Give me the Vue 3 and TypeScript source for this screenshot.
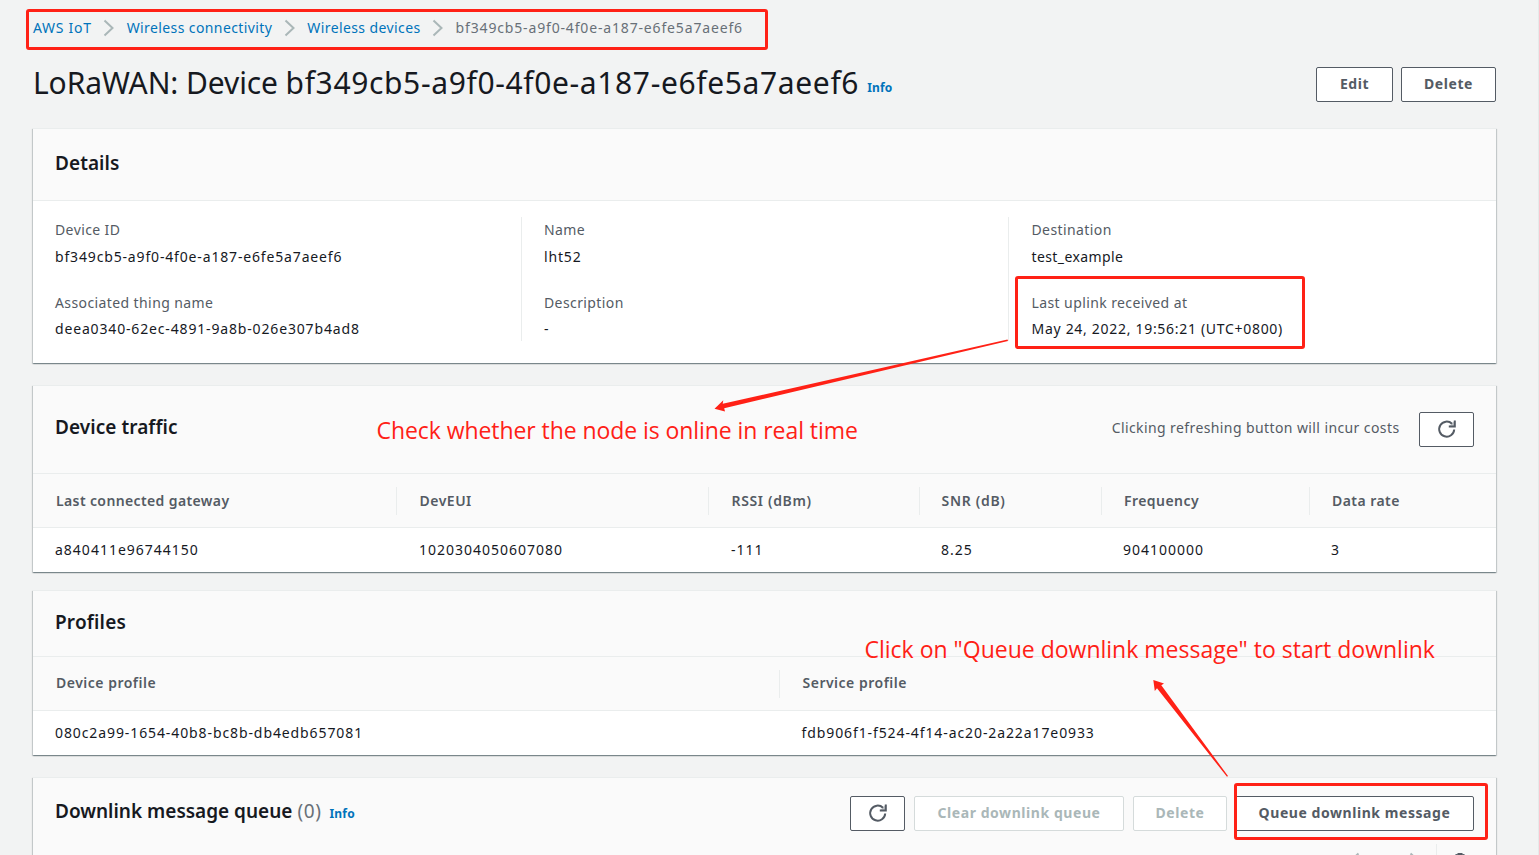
<script setup lang="ts">
interface Field {
  label: string
  value: string
  kind: 'plain' | 'id'
}
interface Column {
  header: string
  value: string
  kind: string
}

const crumbs: string[] = ['AWS IoT', 'Wireless connectivity', 'Wireless devices']
const deviceId = 'bf349cb5-a9f0-4f0e-a187-e6fe5a7aeef6'

const details: Field[][] = [
  [
    { label: 'Device ID', value: deviceId, kind: 'id' },
    { label: 'Associated thing name', value: 'deea0340-62ec-4891-9a8b-026e307b4ad8', kind: 'id' },
  ],
  [
    { label: 'Name', value: 'lht52', kind: 'id' },
    { label: 'Description', value: '-', kind: 'plain' },
  ],
  [
    { label: 'Destination', value: 'test_example', kind: 'plain' },
    { label: 'Last uplink received at', value: 'May 24, 2022, 19:56:21 (UTC+0800)', kind: 'plain' },
  ],
]

const traffic: Column[] = [
  { header: 'Last connected gateway', value: 'a840411e96744150', kind: 'num' },
  { header: 'DevEUI', value: '1020304050607080', kind: 'num' },
  { header: 'RSSI (dBm)', value: '-111', kind: 'num' },
  { header: 'SNR (dB)', value: '8.25', kind: 'num' },
  { header: 'Frequency', value: '904100000', kind: 'num' },
  { header: 'Data rate', value: '3', kind: 'num' },
]

const profiles: Column[] = [
  { header: 'Device profile', value: '080c2a99-1654-40b8-bc8b-db4edb657081', kind: 'wide-id' },
  { header: 'Service profile', value: 'fdb906f1-f524-4f14-ac20-2a22a17e0933', kind: 'wide-id' },
]
</script>

<template>
  <div class="page">
    <nav class="crumbs">
      <template v-for="c in crumbs" :key="c">
        <a class="link" :class="{ first: c === 'AWS IoT' }">{{ c }}</a>
        <svg class="chev" width="12" height="18" viewBox="0 0 12 18"><path d="M1.5 1.5 9.5 9l-8 7.5" /></svg>
      </template>
      <span class="current id">{{ deviceId }}</span>
    </nav>

    <header class="title-row">
      <h1>LoRaWAN: Device <span class="title-id">{{ deviceId }}</span></h1>
      <a class="info">Info</a>
      <div class="actions">
        <button class="btn w-edit">Edit</button>
        <button class="btn w-del">Delete</button>
      </div>
    </header>

    <section class="card details">
      <div class="head"><h2>Details</h2></div>
      <div class="cols">
        <div v-for="(col, i) in details" :key="i" class="col">
          <div v-for="f in col" :key="f.label" class="field">
            <div class="label">{{ f.label }}</div>
            <div class="value" :class="[f.kind, { date: f.label.startsWith('Last') }]">{{ f.value }}</div>
          </div>
        </div>
      </div>
    </section>

    <section class="card traffic">
      <div class="head">
        <h2>Device traffic</h2>
        <span class="hint">Clicking refreshing button will incur costs</span>
        <button class="btn w-icon">
          <svg class="refresh" width="18" height="18" viewBox="0 0 18 18"><path d="M16.200 9.500A7.500 7.500 0 1 1 14 3.800" /><path class="tip" d="M16.800.4v6h-6" /></svg>
        </button>
      </div>
      <div class="table grid-traffic">
        <div v-for="c in traffic" :key="c.header" class="th"><span>{{ c.header }}</span></div>
        <div v-for="c in traffic" :key="c.value" class="td" :class="c.kind">{{ c.value }}</div>
      </div>
    </section>

    <section class="card profiles">
      <div class="head"><h2>Profiles</h2></div>
      <div class="table grid-profiles">
        <div v-for="c in profiles" :key="c.header" class="th"><span>{{ c.header }}</span></div>
        <div v-for="c in profiles" :key="c.value" class="td" :class="c.kind">{{ c.value }}</div>
      </div>
    </section>

    <section class="card queue">
      <div class="head">
        <h2>Downlink message queue <span class="count">(0)</span></h2>
        <a class="info">Info</a>
        <div class="actions">
          <button class="btn w-icon">
            <svg class="refresh" width="18" height="18" viewBox="0 0 18 18"><path d="M16.200 9.500A7.500 7.500 0 1 1 14 3.800" /><path class="tip" d="M16.800.4v6h-6" /></svg>
          </button>
          <button class="btn w-clear" disabled>Clear downlink queue</button>
          <button class="btn w-qdel" disabled>Delete</button>
          <button class="btn w-queue">Queue downlink message</button>
        </div>
      </div>
      <div class="pager">
        <svg class="nav" width="12" height="18" viewBox="0 0 12 18"><path d="M10.5 1.5 2.5 9l8 7.5" /></svg>
        <svg class="nav next" width="12" height="18" viewBox="0 0 12 18"><path d="M1.5 1.5 9.5 9l-8 7.5" /></svg>
        <span class="gear">
          <svg width="18" height="18" viewBox="0 0 18 18"><path class="cog" d="M6.500 1h5v1.200L13 2l2.500 2.500-1 2L17 7v4l-2.500.5 1 2L13 16l-2-1-.5 2h-3L7 15l-2 1-2.500-2.500 1-2L1 11V7l2.500-.5-1-2L5 2l1.500.2z" /></svg>
        </span>
      </div>
    </section>

    <svg class="marks" width="1539" height="855" viewBox="0 0 1539 855">
      <g class="boxes">
        <rect x="27.5" y="10.5" width="739" height="38" rx="1.5" />
        <rect x="1016.5" y="277.5" width="287" height="70" rx="1.5" />
        <rect x="1235.5" y="784.5" width="251" height="54" rx="1.5" />
      </g>
      <g class="arrows">
        <path d="M714.500 408.700 723.300 400.200 722.700 403.800 1007.500 339.600 1008 341 724.200 408.300 725 411.500z" />
        <path d="M1153.300 680 1164 683.400 1161.300 685.200 1228 776 1227 776.800 1157 688.200 1154.800 691z" />
      </g>
      <text class="note check" x="376.500" y="439">Check whether the node is online in real time</text>
      <text class="note" x="864.500" y="658">Click on "Queue downlink message" to start downlink</text>
    </svg>
  </div>
</template>

<style>
body {
  margin: 0;
  background: #f2f3f3;
}
</style>

<style scoped>
.page {
  position: relative;
  box-sizing: border-box;
  width: 1539px;
  height: 855px;
  overflow: hidden;
  padding: 0 42px 0 33px;
  border-right: 1px solid #e6e9e9;
  background: #f2f3f3;
  color: #16191f;
  font: 400 14px/22px "Noto Sans", "Open Sans", sans-serif;
  letter-spacing: 0.4px;
}
h1,
h2 {
  margin: 0;
}
.id {
  letter-spacing: 0.84px;
}
.wide-id {
  letter-spacing: 0.9px;
}
.num {
  letter-spacing: 1px;
}
.crumbs {
  display: flex;
  align-items: center;
  height: 56px;
}
.link,
.info {
  color: #0073bb;
}
.first {
  letter-spacing: 0.7px;
}
.chev {
  margin: 0 11.5px;
}
.chev path,
.nav path {
  fill: none;
  stroke: #aab7b8;
  stroke-width: 2;
}
.current {
  color: #687078;
}
.title-row {
  display: flex;
  height: 72px;
}
h1 {
  font-size: 30px;
  font-weight: 400;
  line-height: 40px;
  margin-top: 7px;
  letter-spacing: -0.1px;
  white-space: nowrap;
}
.title-id {
  letter-spacing: 0.63px;
}
.info {
  font-size: 12px;
  font-weight: 700;
  letter-spacing: 0.2px;
}
.title-row .info {
  margin: 21px 0 0 8px;
}
.actions {
  display: flex;
  margin-left: auto;
}
.title-row .actions {
  gap: 8px;
  margin-top: 11px;
}
.btn {
  box-sizing: border-box;
  height: 35px;
  padding: 0 0 1px;
  border: 1px solid #545b64;
  border-radius: 2px;
  background: #fff;
  color: #545b64;
  font: 700 14px/20px "Noto Sans", "Open Sans", sans-serif;
  letter-spacing: 0.56px;
  white-space: nowrap;
}
.btn:disabled {
  border-color: #d5dbdb;
  color: #aab7b8;
}
.w-edit {
  width: 77px;
}
.w-del {
  width: 95px;
}
.w-icon {
  display: flex;
  align-items: center;
  justify-content: center;
  width: 55px;
}
.w-clear {
  width: 210px;
}
.w-qdel {
  width: 94px;
}
.w-queue {
  width: 239px;
}
.refresh {
  display: block;
  overflow: visible;
}
.refresh path {
  fill: none;
  stroke: #545b64;
  stroke-width: 2;
}
.refresh .tip {
  fill: #545b64;
  fill-opacity: 0.35;
}
.card {
  box-sizing: border-box;
  border-top: 1px solid #eaeded;
  background: #fff;
  box-shadow: 0 1px 1px 0 rgba(0, 28, 36, 0.3), 1px 1px 1px 0 rgba(0, 28, 36, 0.15), -1px 1px 1px 0 rgba(0, 28, 36, 0.15);
}
.head {
  box-sizing: border-box;
  display: flex;
  align-items: center;
  padding: 0 22px;
  border-bottom: 1px solid #eaeded;
  background: #fafafa;
}
h2 {
  font-size: 19px;
  font-weight: 600;
  line-height: 26px;
  letter-spacing: 0.06px;
  white-space: nowrap;
}
.details {
  height: 235px;
}
.details .head {
  height: 72px;
  padding-bottom: 3px;
}
.cols {
  display: grid;
  grid-template-columns: 489px 487px 1fr;
  padding-top: 16px;
}
.col {
  box-sizing: border-box;
  height: 124px;
  padding: 2px 0 0 22px;
  border-right: 1px solid #eaeded;
}
.col:last-child {
  border-right: 0;
  padding-left: 22.5px;
}
.field + .field {
  margin-top: 24px;
}
.label {
  color: #545b64;
}
.value {
  margin-top: 5px;
}
.field + .field .value {
  margin-top: 4px;
}
.date {
  letter-spacing: 0.7px;
}
.traffic {
  height: 187px;
  margin-top: 22px;
}
.traffic .head {
  height: 88px;
}
.traffic h2 {
  margin-top: -5px;
}
.hint {
  margin: -4px 19.5px 0 auto;
  color: #545b64;
}
.table {
  display: grid;
}
.grid-traffic {
  grid-template-columns: 364px 312px 211px 182px 208px 1fr;
}
.grid-profiles {
  grid-template-columns: 747px 1fr;
}
.th {
  box-sizing: border-box;
  height: 54px;
  padding-top: 13px;
  border-bottom: 1px solid #eaeded;
  background: #fafafa;
  color: #545b64;
  font-weight: 600;
  letter-spacing: 0.5px;
}
.th span {
  box-sizing: border-box;
  display: block;
  height: 28px;
  padding-left: 22.5px;
  border-right: 1px solid #eaeded;
  line-height: 28px;
}
.th:first-child span {
  padding-left: 23px;
}
.grid-traffic .th:first-child {
  letter-spacing: 0.38px;
}
.grid-traffic .th:nth-child(3) {
  letter-spacing: 0.65px;
}
.grid-traffic .th:nth-child(4) span {
  padding-left: 21.5px;
  letter-spacing: 0.7px;
}
.grid-traffic .th:nth-child(n + 5) span {
  padding-left: 22px;
  letter-spacing: 0.45px;
}
.grid-profiles .th span {
  line-height: 26px;
}
.th:nth-child(6) span,
.grid-profiles .th:nth-child(2) span {
  border-right: 0;
}
.td {
  padding-left: 22px;
  line-height: 44px;
}
.grid-traffic .td:nth-child(n + 10) {
  padding-left: 21px;
}
.grid-profiles .td:last-child {
  padding-left: 21.5px;
}
.profiles {
  height: 165px;
  margin-top: 18px;
}
.profiles .head {
  height: 66px;
  padding-bottom: 3px;
}
.profiles h2 {
  letter-spacing: 0.18px;
}
.queue {
  height: 120px;
  margin-top: 22px;
  background: #fafafa;
}
.queue .head {
  height: 66px;
  align-items: flex-start;
  border-bottom: 0;
}
.queue h2 {
  margin-top: 20px;
  letter-spacing: -0.01px;
}
.count {
  color: #687078;
  font-weight: 400;
}
.queue .count {
  letter-spacing: 0.6px;
}
.queue .info {
  margin: 25px 0 0 8px;
}
.queue .actions {
  gap: 9px;
  margin-top: 18px;
}
.queue .actions .btn:last-child {
  margin-left: -1px;
}
.pager {
  display: flex;
  justify-content: flex-end;
  padding-right: 22px;
}
.nav {
  margin: 8px 21px 0 22px;
}
.next {
  margin: 8px 15px 0 28px;
}
.gear {
  height: 28px;
  padding: 8px 5px 0 14px;
  border-left: 1px solid #eaeded;
}
.cog {
  fill: #545b64;
}
.marks {
  position: absolute;
  top: 0;
  left: 0;
}
.boxes rect {
  fill: none;
  stroke: #ff2116;
  stroke-width: 3;
}
.arrows path {
  fill: #ff2116;
}
.note {
  fill: #ff2116;
  font: 400 23px "Open Sans", "Noto Sans", sans-serif;
  letter-spacing: 0;
}
.check {
  letter-spacing: -0.07px;
}
</style>
